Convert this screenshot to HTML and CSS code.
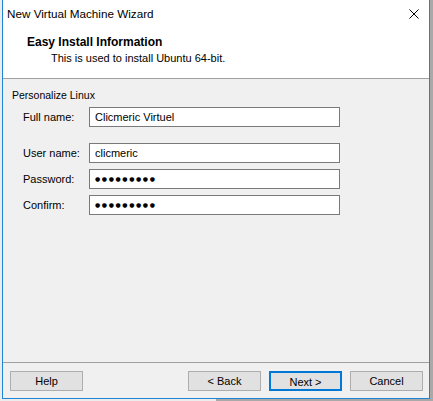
FILE: index.html
```html
<!DOCTYPE html>
<html>
<head>
<meta charset="utf-8">
<link rel="stylesheet" href="styles.css">
</head>
<body>
<div class="window">
  <div class="titlebar">
    <span class="title">New Virtual Machine Wizard</span>
    <svg class="close" width="10" height="10" viewBox="0 0 10 10"><path d="M0.5 0.5 L9.5 9.5 M9.5 0.5 L0.5 9.5" stroke="#000" stroke-width="1" fill="none"/></svg>
  </div>
  <div class="header">
    <div class="h-title">Easy Install Information</div>
    <div class="h-sub">This is used to install Ubuntu 64-bit.</div>
  </div>
  <div class="content">
    <div class="group-label">Personalize Linux</div>
    <div class="row first">
      <span class="label">Full name:</span>
      <div class="field">Clicmeric Virtuel</div>
    </div>
    <div class="row spaced">
      <span class="label">User name:</span>
      <div class="field">clicmeric</div>
    </div>
    <div class="row">
      <span class="label">Password:</span>
      <div class="field dots">●●●●●●●●●</div>
    </div>
    <div class="row">
      <span class="label">Confirm:</span>
      <div class="field dots">●●●●●●●●●</div>
    </div>
  </div>
  <div class="footer">
    <button class="btn">Help</button>
    <div class="spacer"></div>
    <button class="btn">&lt; Back</button>
    <button class="btn default">Next &gt;</button>
    <button class="btn">Cancel</button>
  </div>
</div>
</body>
</html>
```

FILE: styles.css
```css
html, body {
  margin: 0;
  padding: 0;
}
body {
  width: 433px;
  height: 401px;
  overflow: hidden;
  background: linear-gradient(90deg, #ececec 0 216px, #a9a9a9 216px);
  font-family: "Liberation Sans", Arial, sans-serif;
  font-size: 11px;
  color: #000;
}
.window {
  margin-left: 2px;
  width: 426px;
  height: 398px;
  border: 1px solid #1e84d6;
  border-top: none;
  background: #f0f0f0;
  display: flex;
  flex-direction: column;
}
.titlebar {
  height: 29px;
  background: #fff;
  display: flex;
  align-items: flex-start;
  justify-content: space-between;
  padding: 7px 10px 0 4px;
  box-sizing: border-box;
}
.title {
  font-size: 11.7px;
  line-height: 14px;
}
.close {
  margin-top: 2px;
}
.header {
  background: #fff;
  height: 50px;
  border-bottom: 1px solid #a0a0a0;
  padding: 6px 0 0 24px;
  box-sizing: border-box;
}
.h-title {
  font-weight: bold;
  font-size: 12px;
  line-height: 14px;
}
.h-sub {
  margin-top: 2px;
  padding-left: 24px;
  line-height: 14px;
}
.content {
  flex: 1;
  padding: 9px 0 0 9px;
}
.group-label {
  line-height: 14px;
  font-size: 10.5px;
}
.row {
  display: flex;
  align-items: center;
  margin-top: 6px;
  padding-left: 11px;
}
.row.first {
  margin-top: 5px;
}
.row.spaced {
  margin-top: 16px;
}
.label {
  width: 66px;
}
.field {
  width: 244px;
  height: 18px;
  border: 1px solid #7a7a7a;
  background: #fff;
  padding-left: 5px;
  line-height: 18px;
  box-sizing: content-box;
}
.field.dots {
  font-family: "DejaVu Sans", sans-serif;
  font-size: 6px;
  letter-spacing: 1.6px;
}
.footer {
  border-top: 1px solid #a0a0a0;
  height: 36px;
  display: flex;
  align-items: flex-start;
  padding: 8px 6px 0 7px;
  gap: 8px;
  box-sizing: border-box;
}
.spacer {
  flex: 1;
}
.btn {
  width: 73px;
  height: 20px;
  background: #e1e1e1;
  border: 1px solid #adadad;
  font-family: inherit;
  font-size: 11px;
  color: #000;
  padding: 0;
  margin: 0;
  line-height: 18px;
}
.btn.default {
  border: 2px solid #0078d7;
}
```
